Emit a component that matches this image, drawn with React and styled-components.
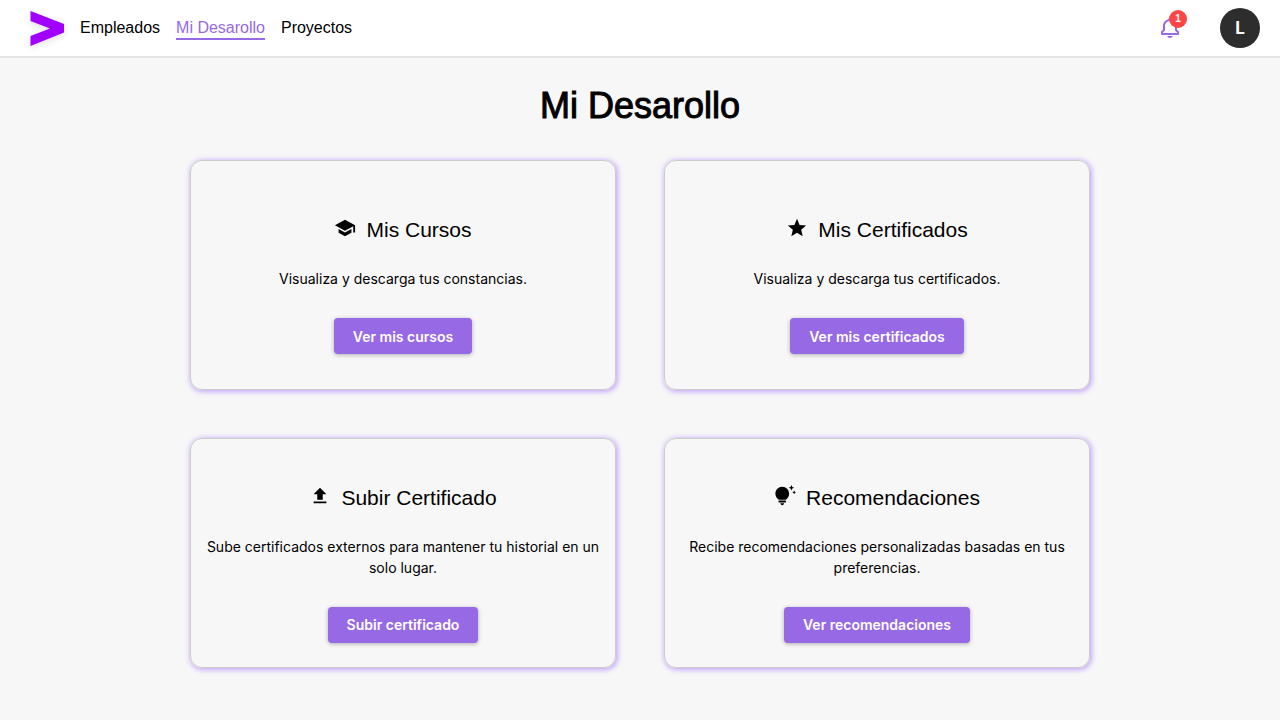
import React from "react";
import styled, { createGlobalStyle } from "styled-components";
import { MdSchool, MdStar, MdUpload, MdTipsAndUpdates } from "react-icons/md";
import { BiBell } from "react-icons/bi";

const GlobalStyle = createGlobalStyle`
  * { box-sizing: border-box; }
  body {
    margin: 0;
    background: #f7f7f7;
    color: #000;
    font-family: Inter, "Liberation Sans", sans-serif;
  }
`;

const Header = styled.header`
  display: flex;
  align-items: center;
  justify-content: space-between;
  height: 58px;
  padding: 0 20px 0 30px;
  background: #fff;
  border-bottom: 2px solid #e4e4e4;
`;

const Nav = styled.nav`
  display: flex;
  align-items: center;
  gap: 16px;
`;

const Logo = styled.svg`
  display: block;
  filter: drop-shadow(0 2px 3px rgba(0, 0, 0, 0.12));
`;

const NavLink = styled.a`
  padding-top: 2px;
  font-family: "Liberation Sans", sans-serif;
  font-size: 16px;
  line-height: 20px;
  text-decoration: none;
  color: ${(p) => (p.$active ? "#9869e5" : "#000")};
  border-bottom: 2px solid ${(p) => (p.$active ? "#9869e5" : "transparent")};
`;

const Actions = styled.div`
  display: flex;
  align-items: center;
  gap: 38px;
`;

const BellButton = styled.button`
  position: relative;
  display: block;
  padding: 0;
  border: 0;
  background: none;
  color: #9869e5;
  cursor: pointer;
  svg { display: block; }
`;

const Badge = styled.span`
  position: absolute;
  top: -6px;
  right: -5px;
  width: 18px;
  height: 18px;
  border-radius: 50%;
  background: #ff4444;
  color: #fff;
  font-size: 10px;
  font-weight: 600;
  line-height: 18px;
  text-align: center;
`;

const Avatar = styled.button`
  width: 40px;
  height: 40px;
  padding: 0;
  border: 0;
  border-radius: 50%;
  background: #2d2d2d;
  color: #fff;
  font-family: inherit;
  font-size: 17px;
  font-weight: 700;
  cursor: pointer;
`;

const Main = styled.main`
  max-width: 900px;
  margin: 0 auto;
  padding: 24px 0 52px;
`;

const Title = styled.h1`
  margin: 0 0 30px;
  font-family: "Liberation Sans", sans-serif;
  font-size: 36px;
  font-weight: 400;
  line-height: 48px;
  text-align: center;
  -webkit-text-stroke: 1px #000;
`;

const Grid = styled.div`
  display: grid;
  grid-template-columns: repeat(auto-fit, minmax(320px, 1fr));
  gap: 48px;
`;

const Card = styled.section`
  display: flex;
  flex-direction: column;
  align-items: center;
  justify-content: center;
  min-height: 230px;
  padding: 12px;
  border: 1px solid #ccc;
  border-radius: 12px;
  box-shadow: 1px 1px 5px 1px rgba(165, 115, 255, 0.6);
  text-align: center;
`;

const CardTitle = styled.h2`
  display: flex;
  align-items: center;
  gap: 10px;
  margin: 20px 0 24px;
  font-family: "Liberation Sans", sans-serif;
  font-size: 21px;
  font-weight: 400;
  line-height: 28px;
  svg { margin-bottom: 4px; }
`;

const CardText = styled.p`
  margin: 0 0 29px;
  font-size: 14px;
  line-height: 21px;
`;

const CardButton = styled.button`
  height: 36px;
  padding: 0 19px;
  border: 0;
  border-radius: 4px;
  background: #9869e5;
  box-shadow: 0 1px 4px rgba(0, 0, 0, 0.3);
  color: #fff;
  font-family: inherit;
  font-size: 14px;
  font-weight: 600;
  cursor: pointer;
`;

const cards = [
  { icon: MdSchool, title: "Mis Cursos", text: "Visualiza y descarga tus constancias.", action: "Ver mis cursos" },
  { icon: MdStar, title: "Mis Certificados", text: "Visualiza y descarga tus certificados.", action: "Ver mis certificados" },
  { icon: MdUpload, title: "Subir Certificado", text: "Sube certificados externos para mantener tu historial en un solo lugar.", action: "Subir certificado" },
  { icon: MdTipsAndUpdates, title: "Recomendaciones", text: "Recibe recomendaciones personalizadas basadas en tus preferencias.", action: "Ver recomendaciones" },
];

export default function App() {
  return (
    <>
      <GlobalStyle />
      <Header>
        <Nav>
          <Logo width="34" height="36" viewBox="0 0 34 36" aria-hidden="true">
            <path d="M0.500 1L34 14V22.500L0.500 36V26L20 18.500L0.500 11Z" fill="#a100ff" />
          </Logo>
          <NavLink href="#empleados">Empleados</NavLink>
          <NavLink href="#desarrollo" $active>Mi Desarollo</NavLink>
          <NavLink href="#proyectos">Proyectos</NavLink>
        </Nav>
        <Actions>
          <BellButton aria-label="Notificaciones">
            <BiBell size={24} aria-hidden="true" />
            <Badge>1</Badge>
          </BellButton>
          <Avatar aria-label="Perfil">L</Avatar>
        </Actions>
      </Header>
      <Main>
        <Title>Mi Desarollo</Title>
        <Grid>
          {cards.map(({ icon: Icon, title, text, action }) => (
            <Card key={title}>
              <CardTitle>
                <Icon size={22} aria-hidden="true" />
                {title}
              </CardTitle>
              <CardText>{text}</CardText>
              <CardButton>{action}</CardButton>
            </Card>
          ))}
        </Grid>
      </Main>
    </>
  );
}
